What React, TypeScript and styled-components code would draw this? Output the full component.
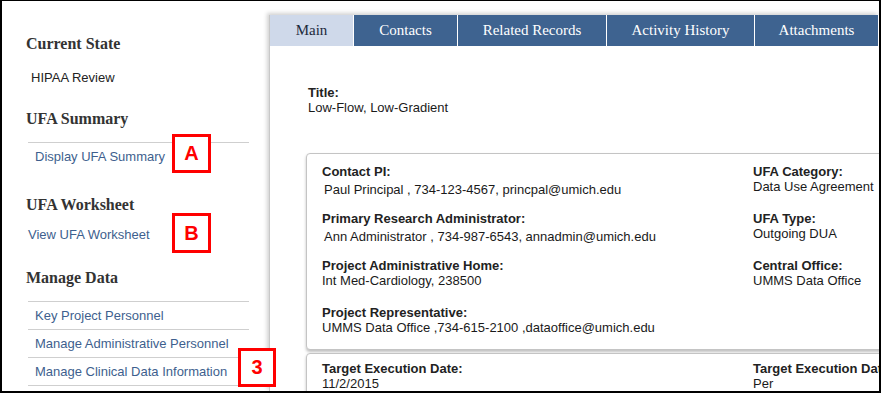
import styled, { createGlobalStyle } from "styled-components";

const GlobalStyle = createGlobalStyle`
  html, body {
    margin: 0;
    padding: 0;
    background: #fff;
  }
  body {
    font-family: "Liberation Sans", Arial, sans-serif;
  }
`;

const Frame = styled.div`
  position: relative;
  box-sizing: border-box;
  width: 881px;
  height: 393px;
  border: 2px solid #000;
  border-top-width: 1px;
  overflow: hidden;
  display: flex;
  background: #fff;
`;

// ---------- left sidebar ----------
const Sidebar = styled.aside`
  flex: 0 0 267px;
  box-sizing: border-box;
  padding: 33px 0 0 24px;
`;

const SideHeading = styled.h3<{ $top?: number }>`
  margin: ${(p) => p.$top ?? 0}px 0 0;
  font-family: "Liberation Serif", "Times New Roman", serif;
  font-size: 16px;
  line-height: 20px;
  font-weight: bold;
  color: #333;
`;

const StateText = styled.div`
  margin-top: 16px;
  padding-left: 5px;
  font-size: 13px;
  line-height: 15px;
  color: #222;
`;

const PlainLink = styled.a`
  display: block;
  margin-top: 12px;
  padding-left: 2px;
  font-size: 13px;
  line-height: 15px;
  color: #3e5f8e;
  text-decoration: none;
`;

const LinkList = styled.ul<{ $closed?: boolean }>`
  list-style: none;
  margin: 13px 0 0 2px;
  padding: 0;
  width: 221px;
  border-bottom: ${(p) => (p.$closed ? "1px solid #cfcfcf" : "none")};
`;

const LinkRow = styled.li`
  border-top: 1px solid #cfcfcf;
  height: 27px;
  line-height: 27px;
  padding-left: 7px;
  font-size: 13px;
  color: #3e5f8e;
  white-space: nowrap;
`;

// ---------- main panel ----------
const Panel = styled.main`
  flex: 1;
  min-width: 0;
  margin-top: 14px;
  border-left: 1px solid #c8c8c8;
  box-shadow: -2px -2px 4px rgba(0, 0, 0, 0.18);
`;

const TabBar = styled.nav`
  display: flex;
  height: 31px;
  background: #3e6390;
`;

const Tab = styled.div<{ $active?: boolean; $width?: number }>`
  box-sizing: border-box;
  flex: ${(p) => (p.$width ? `0 0 ${p.$width}px` : "1 0 auto")};
  border-right: 1px solid #fff;
  background: ${(p) => (p.$active ? "#cfd9ea" : "#3e6390")};
  color: ${(p) => (p.$active ? "#1d2a3c" : "#fff")};
  font-family: "Liberation Serif", "Times New Roman", serif;
  font-size: 15px;
  line-height: 31px;
  text-align: center;
  white-space: nowrap;
`;

const Content = styled.section`
  padding: 39px 0 0 36px;
`;

const TitleBlock = styled.div`
  margin-left: 2px;
`;

const Label = styled.div`
  font-size: 13px;
  line-height: 15px;
  font-weight: bold;
  color: #222;
  white-space: nowrap;
`;

const Value = styled.div<{ $indent?: boolean }>`
  font-size: 13px;
  line-height: 15px;
  color: #1a1a1a;
  white-space: nowrap;
  margin-top: ${(p) => (p.$indent ? 3 : 0)}px;
  padding-left: ${(p) => (p.$indent ? 2 : 0)}px;
`;

const Card = styled.div<{ $top: number; $padTop: number }>`
  display: grid;
  grid-template-columns: 431px 1fr;
  width: 700px;
  margin-top: ${(p) => p.$top}px;
  padding: ${(p) => p.$padTop}px 0 14px 15px;
  border: 1px solid #c4c4c4;
  border-radius: 4px;
  box-shadow: 0 2px 3px rgba(0, 0, 0, 0.25);
  background: #fff;
`;

const Group = styled.div`
  min-height: 47px;
  &:last-child {
    min-height: 0;
  }
`;

// ---------- red annotation markers ----------
const Marker = styled.div<{ $x: number; $y: number; $w: number; $h: number }>`
  position: absolute;
  left: ${(p) => p.$x}px;
  top: ${(p) => p.$y}px;
  width: ${(p) => p.$w}px;
  height: ${(p) => p.$h}px;
  box-sizing: border-box;
  border: 3px solid #f00;
  background: #fff;
  color: #f00;
  font-family: "Liberation Sans", Arial, sans-serif;
  font-weight: bold;
  font-size: 20px;
  display: flex;
  align-items: center;
  justify-content: center;
`;

const tabs = [
  { name: "Main", width: 84, active: true },
  { name: "Contacts", width: 104 },
  { name: "Related Records", width: 149 },
  { name: "Activity History", width: 148 },
  { name: "Attachments" },
];

export default function App() {
  return (
    <>
      <GlobalStyle />
      <Frame>
        <Sidebar>
          <SideHeading>Current State</SideHeading>
          <StateText>HIPAA Review</StateText>

          <SideHeading $top={24}>UFA Summary</SideHeading>
          <LinkList>
            <LinkRow>Display UFA Summary</LinkRow>
          </LinkList>

          <SideHeading $top={25}>UFA Worksheet</SideHeading>
          <PlainLink>View UFA Worksheet</PlainLink>

          <SideHeading $top={26}>Manage Data</SideHeading>
          <LinkList $closed>
            <LinkRow>Key Project Personnel</LinkRow>
            <LinkRow>Manage Administrative Personnel</LinkRow>
            <LinkRow>Manage Clinical Data Information</LinkRow>
          </LinkList>
        </Sidebar>

        <Panel>
          <TabBar>
            {tabs.map((t) => (
              <Tab key={t.name} $active={t.active} $width={t.width}>
                {t.name}
              </Tab>
            ))}
          </TabBar>

          <Content>
            <TitleBlock>
              <Label>Title:</Label>
              <Value>Low-Flow, Low-Gradient</Value>
            </TitleBlock>

            <Card $top={38} $padTop={10}>
              <div>
                <Group>
                  <Label>Contact PI:</Label>
                  <Value $indent>Paul Principal , 734-123-4567, princpal@umich.edu</Value>
                </Group>
                <Group>
                  <Label>Primary Research Administrator:</Label>
                  <Value $indent>Ann Administrator , 734-987-6543, annadmin@umich.edu</Value>
                </Group>
                <Group>
                  <Label>Project Administrative Home:</Label>
                  <Value>Int Med-Cardiology, 238500</Value>
                </Group>
                <Group>
                  <Label>Project Representative:</Label>
                  <Value>UMMS Data Office ,734-615-2100 ,dataoffice@umich.edu</Value>
                </Group>
              </div>
              <div>
                <Group>
                  <Label>UFA Category:</Label>
                  <Value>Data Use Agreement</Value>
                </Group>
                <Group>
                  <Label>UFA Type:</Label>
                  <Value>Outgoing DUA</Value>
                </Group>
                <Group>
                  <Label>Central Office:</Label>
                  <Value>UMMS Data Office</Value>
                </Group>
              </div>
            </Card>

            <Card $top={3} $padTop={7}>
              <div>
                <Group>
                  <Label>Target Execution Date:</Label>
                  <Value>11/2/2015</Value>
                </Group>
              </div>
              <div>
                <Group>
                  <Label>Target Execution Date Reason:</Label>
                  <Value>Per</Value>
                </Group>
              </div>
            </Card>
          </Content>
        </Panel>

        <Marker $x={170} $y={133} $w={39} $h={39}>A</Marker>
        <Marker $x={170} $y={212} $w={39} $h={40}>B</Marker>
        <Marker $x={236} $y={347} $w={38} $h={39}>3</Marker>
      </Frame>
    </>
  );
}
